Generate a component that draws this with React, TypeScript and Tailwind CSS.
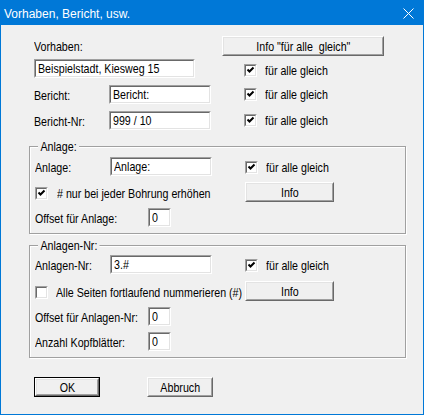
import React from 'react';

// no Arial Narrow in the sandbox, so squeeze Liberation Sans horizontally
const font = "font-['Liberation_Sans',sans-serif]";

const T = ({ children, center }: { children: React.ReactNode; center?: boolean }) => (
  <span className={`inline-block whitespace-pre text-[13px] leading-[15px] text-black scale-x-[0.82] ${center ? 'origin-center' : 'origin-left'}`}>
    {children}
  </span>
);

// classic win32 sunken edit field
const Field = ({ value, w }: { value: string; w: string }) => (
  <div className={`${w} h-[19px] shrink-0 border border-t-[#a0a0a0] border-l-[#a0a0a0] border-b-white border-r-white`}>
    <div className="h-full border border-t-[#696969] border-l-[#696969] border-b-[#e3e3e3] border-r-[#e3e3e3] bg-white pl-[2px] flex items-center overflow-hidden">
      <T>{value}</T>
    </div>
  </div>
);

const Btn = ({ label, w, isDefault }: { label: string; w: string; isDefault?: boolean }) => (
  <div className={`${w} h-[20px] shrink-0 ${isDefault ? 'border border-black' : ''}`}>
    <div className="h-full border border-t-white border-l-white border-b-[#696969] border-r-[#696969]">
      <div className="h-full border border-t-[#e3e3e3] border-l-[#e3e3e3] border-b-[#a0a0a0] border-r-[#a0a0a0] bg-[#f0f0f0] flex items-center justify-center">
        <T center>{label}</T>
      </div>
    </div>
  </div>
);

const Check = ({ checked }: { checked: boolean }) => (
  <div className="w-[13px] h-[13px] shrink-0 border border-t-[#a0a0a0] border-l-[#a0a0a0] border-b-white border-r-white">
    <div className="w-full h-full border border-t-[#696969] border-l-[#696969] border-b-[#e3e3e3] border-r-[#e3e3e3] bg-white">
      {checked && (
        <svg width="9" height="9" viewBox="0 0 9 9" className="block">
          <path d="M1.5 3.5 L3.5 5.5 L7.5 1.5" stroke="#000" strokeWidth="2" fill="none" />
        </svg>
      )}
    </div>
  </div>
);

const CheckLabel = ({ label, checked = true, gap = 'gap-[8px]' }: { label: string; checked?: boolean; gap?: string }) => (
  <div className={`flex items-center ${gap}`}>
    <Check checked={checked} />
    <T>{label}</T>
  </div>
);

const Group = ({ title, h, pt, children }: { title: string; h: string; pt: string; children: React.ReactNode }) => (
  <div className={`relative ml-[-5px] w-[377px] ${h} ${pt} pl-[5px] border border-[#a0a0a0] shadow-[inset_1px_1px_0_white,1px_1px_0_white] flex flex-col`}>
    <span className="absolute -top-[8px] left-[8px] px-[3px] bg-[#f0f0f0] whitespace-pre text-[13px] leading-[15px] text-black origin-left scale-x-[0.82]">
      {title}
    </span>
    {children}
  </div>
);

const Label = ({ text, w }: { text: string; w: string }) => (
  <div className={`${w} shrink-0`}>
    <T>{text}</T>
  </div>
);

export default function App() {
  return (
    <div className={`w-[424px] h-[415px] bg-[#0078d7] px-[1px] pb-[1px] flex flex-col ${font}`}>
      <div className="h-[25px] flex items-center justify-between pl-[3px] pr-[9px] pt-[2px]">
        <span className="text-white text-[12px]">Vorhaben, Bericht, usw.</span>
        <svg width="11" height="11" viewBox="0 0 11 11">
          <path d="M0.5 0.5 L10.5 10.5 M10.5 0.5 L0.5 10.5" stroke="#fff" strokeWidth="1" />
        </svg>
      </div>
      <div className="flex-1 bg-[#f0f0f0] pl-[33px] pt-[11px] flex flex-col">
        {/* Vorhaben */}
        <div className="h-[20px] flex items-center">
          <Label text="Vorhaben:" w="w-[188px]" />
          <Btn label={'Info "für alle  gleich"'} w="w-[162px]" />
        </div>
        <div className="mt-[3px] h-[19px] flex items-center">
          <div className="w-[210px]">
            <Field value="Beispielstadt, Kiesweg 15" w="w-[161px]" />
          </div>
          <div className="mt-[4px]">
            <CheckLabel label="für alle gleich" />
          </div>
        </div>
        <div className="mt-[7px] h-[19px] flex items-center">
          <Label text="Bericht:" w="w-[75px]" />
          <div className="w-[135px]">
            <Field value="Bericht:" w="w-[102px]" />
          </div>
          <CheckLabel label="für alle gleich" />
        </div>
        <div className="mt-[7px] h-[19px] flex items-center">
          <Label text="Bericht-Nr:" w="w-[75px]" />
          <div className="w-[135px]">
            <Field value="999 / 10" w="w-[102px]" />
          </div>
          <CheckLabel label="für alle gleich" />
        </div>

        {/* Anlage */}
        <div className="mt-[16px]">
          <Group title="Anlage:" h="h-[88px]" pt="pt-[10px]">
            <div className="h-[19px] flex items-center">
              <Label text="Anlage:" w="w-[75px]" />
              <div className="w-[135px]">
                <Field value="Anlage:" w="w-[102px]" />
              </div>
              <div className="mt-[2px]">
                <CheckLabel label="für alle gleich" />
              </div>
            </div>
            <div className="mt-[6px] h-[20px] flex items-center">
              <div className="w-[210px] mt-[2px]">
                <CheckLabel label="# nur bei jeder Bohrung erhöhen" gap="gap-[9px]" />
              </div>
              <Btn label="Info" w="w-[89px]" />
            </div>
            <div className="mt-[6px] h-[19px] flex items-center">
              <Label text="Offset für Anlage:" w="w-[113px]" />
              <Field value="0" w="w-[23px]" />
            </div>
          </Group>
        </div>

        {/* Anlagen-Nr */}
        <div className="mt-[11px]">
          <Group title="Anlagen-Nr:" h="h-[113px]" pt="pt-[9px]">
            <div className="h-[19px] flex items-center">
              <Label text="Anlagen-Nr:" w="w-[75px]" />
              <div className="w-[135px]">
                <Field value="3.#" w="w-[102px]" />
              </div>
              <div className="mt-[2px]">
                <CheckLabel label="für alle gleich" />
              </div>
            </div>
            <div className="mt-[7px] h-[20px] flex items-center">
              <div className="w-[210px] mt-[2px]">
                <CheckLabel label="Alle Seiten fortlaufend nummerieren (#)" checked={false} />
              </div>
              <Btn label="Info" w="w-[89px]" />
            </div>
            <div className="mt-[6px] h-[19px] flex items-center">
              <Label text="Offset für Anlagen-Nr:" w="w-[113px]" />
              <Field value="0" w="w-[23px]" />
            </div>
            <div className="mt-[6px] h-[19px] flex items-center">
              <Label text="Anzahl Kopfblätter:" w="w-[113px]" />
              <Field value="0" w="w-[23px]" />
            </div>
          </Group>
        </div>

        {/* buttons */}
        <div className="mt-[19px] flex items-center gap-[47px]">
          <Btn label="OK" w="w-[66px]" isDefault />
          <Btn label="Abbruch" w="w-[66px]" />
        </div>
      </div>
    </div>
  );
}
